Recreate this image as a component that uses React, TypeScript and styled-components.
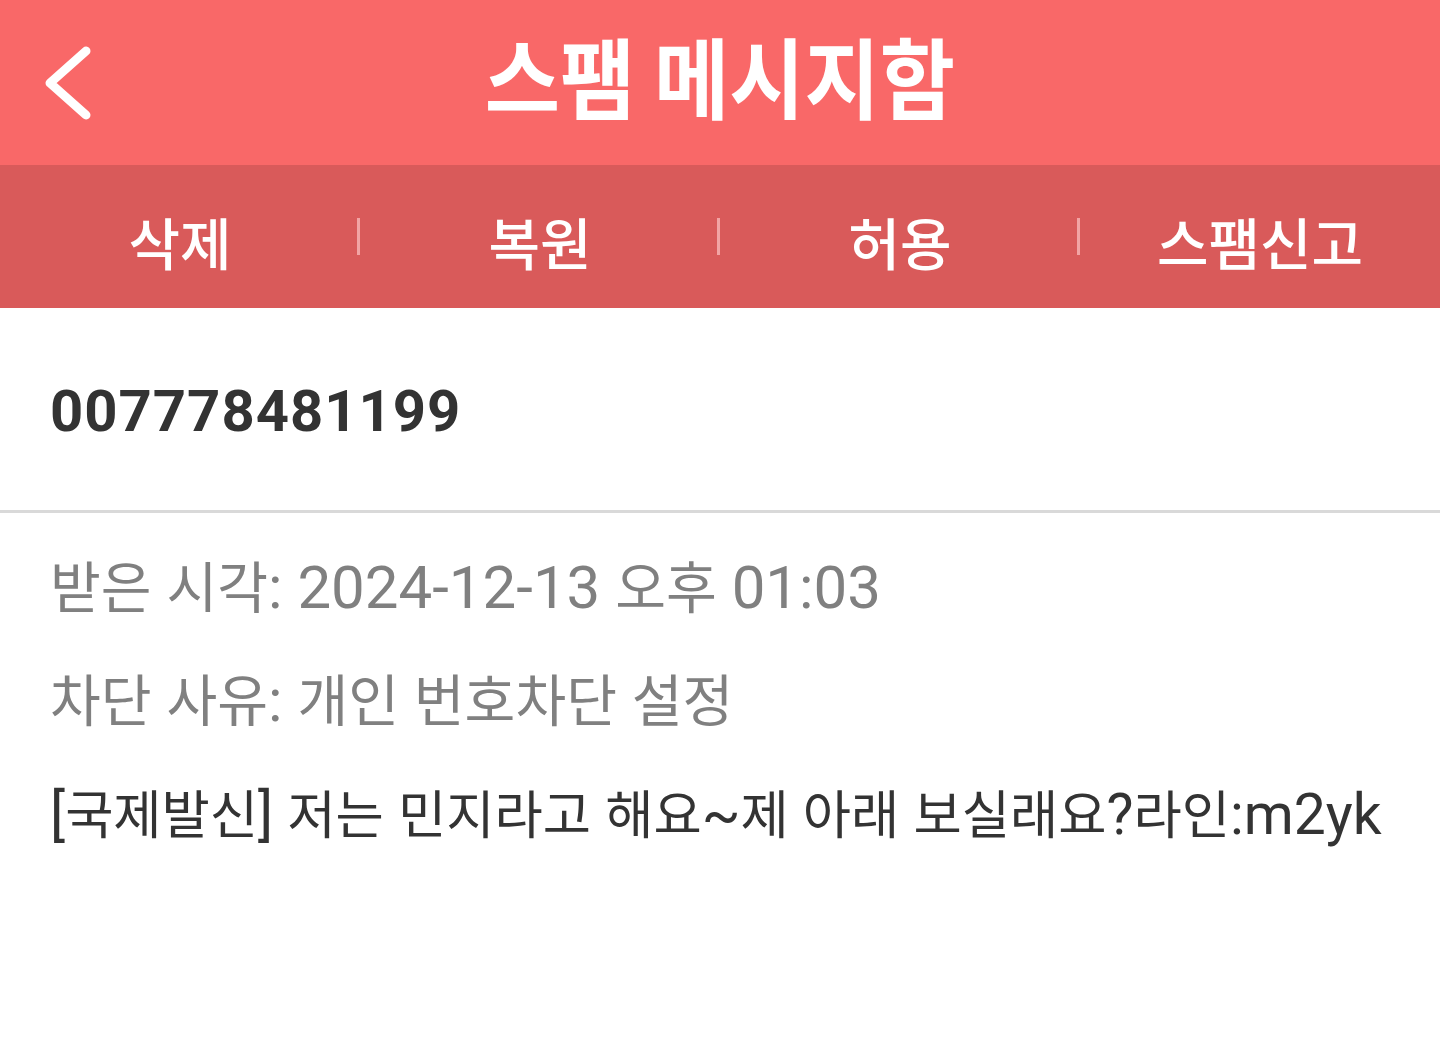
import React from "react";
import styled, { createGlobalStyle } from "styled-components";

const GlobalStyle = createGlobalStyle`
  html, body {
    margin: 0;
    padding: 0;
    background: #ffffff;
  }
  body {
    font-family: Roboto, "Noto Sans CJK KR", sans-serif;
  }
`;

const Screen = styled.div`
  width: 1440px;
  min-height: 1056px;
  background: #ffffff;
  display: flex;
  flex-direction: column;
`;

const TopBar = styled.header`
  height: 165px;
  background: #f96868;
  display: grid;
  grid-template-columns: 140px 1fr 140px;
  align-items: center;
`;

const BackButton = styled.button`
  border: 0;
  background: transparent;
  padding: 0 0 0 40px;
  height: 100%;
  display: flex;
  align-items: center;
  cursor: pointer;
`;

const Title = styled.h1`
  margin: 0;
  text-align: center;
  color: #ffffff;
  font-family: "Noto Sans CJK KR", sans-serif;
  font-weight: 700;
  font-size: 88px;
  line-height: 1;
  padding-bottom: 18px;
  transform: scaleX(0.93);
`;

const ActionBar = styled.nav`
  height: 143px;
  background: #d95a5a;
  display: grid;
  grid-template-columns: repeat(4, 1fr);
  align-items: center;
`;

const Action = styled.button<{ $divider?: boolean }>`
  position: relative;
  border: 0;
  background: transparent;
  color: #ffffff;
  font-family: "Noto Sans CJK KR", sans-serif;
  font-weight: 500;
  font-size: 56px;
  line-height: 1;
  height: 100%;
  padding: 8px 0 0;
  cursor: pointer;

  &::after {
    content: "";
    display: ${(p) => (p.$divider ? "block" : "none")};
    position: absolute;
    right: 0;
    top: 53px;
    width: 3px;
    height: 37px;
    background: #f2a4a4;
  }
`;

const SenderRow = styled.section`
  box-sizing: border-box;
  height: 205px;
  padding: 3px 50px 0;
  display: flex;
  align-items: center;
  border-bottom: 3px solid #d9d9d9;
`;

const Sender = styled.div`
  color: #333333;
  font-family: Roboto, "Noto Sans CJK KR", sans-serif;
  font-weight: 700;
  font-size: 58px;
  letter-spacing: 1px;
  line-height: 1;
`;

const Body = styled.section`
  padding: 18px 50px 0;
  display: flex;
  flex-direction: column;
`;

const Line = styled.p<{ $tone?: "muted" | "strong"; $size?: number }>`
  margin: 0;
  height: 113px;
  display: flex;
  align-items: center;
  color: ${(p) => (p.$tone === "muted" ? "#808080" : "#333333")};
  font-family: Roboto, "Noto Sans CJK KR", sans-serif;
  font-size: ${(p) => p.$size ?? 60}px;
  line-height: 1;
  white-space: pre;
`;

/* Hangul runs are set a little smaller than the Latin digits around them */
const Hangul = styled.span`
  font-family: "Noto Sans CJK KR", sans-serif;
  font-size: 0.92em;
`;

function Mixed({ text }: { text: string }) {
  const runs = text.match(/[\uac00-\ud7a3]+|[^\uac00-\ud7a3]+/g) ?? [];
  return (
    <span>
      {runs.map((r, i) =>
        /[\uac00-\ud7a3]/.test(r) ? <Hangul key={i}>{r}</Hangul> : <React.Fragment key={i}>{r}</React.Fragment>
      )}
    </span>
  );
}

const actions = ["삭제", "복원", "허용", "스팸신고"];

export default function App() {
  return (
    <Screen>
      <GlobalStyle />
      <TopBar>
        <BackButton aria-label="뒤로">
          <svg width="60" height="80" viewBox="0 0 60 80">
            <polyline
              points="46,8 10,40 46,72"
              fill="none"
              stroke="#ffffff"
              strokeWidth="9"
              strokeLinecap="round"
              strokeLinejoin="round"
            />
          </svg>
        </BackButton>
        <Title>스팸 메시지함</Title>
        <div />
      </TopBar>
      <ActionBar>
        {actions.map((a, i) => (
          <Action key={a} $divider={i < actions.length - 1}>
            {a}
          </Action>
        ))}
      </ActionBar>
      <SenderRow>
        <Sender>007778481199</Sender>
      </SenderRow>
      <Body>
        <Line $tone="muted">
          <Mixed text="받은 시각: 2024-12-13 오후 01:03" />
        </Line>
        <Line $tone="muted">
          <Mixed text="차단 사유: 개인 번호차단 설정" />
        </Line>
        <Line $size={57}>
          <Mixed text="[국제발신] 저는 민지라고 해요~제 아래 보실래요?라인:m2yk" />
        </Line>
      </Body>
    </Screen>
  );
}
